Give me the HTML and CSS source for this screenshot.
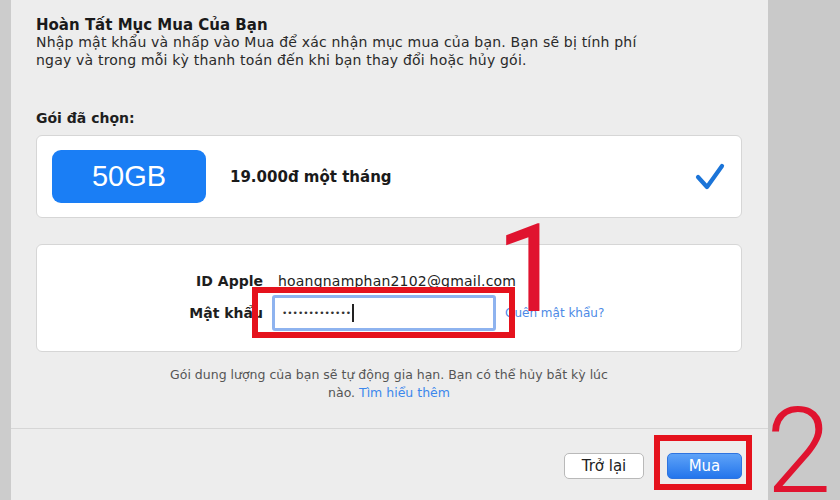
FILE: index.html
```html
<!DOCTYPE html>
<html>
<head>
<meta charset="utf-8">
<title>Hoàn Tất Mục Mua Của Bạn</title>
<link rel="stylesheet" href="styles.css">
</head>
<body>
  <div class="edge edge-left"></div>
  <div class="dialog">
    <div class="dialog-body">
      <h1 class="title">Hoàn Tất Mục Mua Của Bạn</h1>
      <p class="intro">Nhập mật khẩu và nhấp vào Mua để xác nhận mục mua của bạn. Bạn sẽ bị tính phí<br>ngay và trong mỗi kỳ thanh toán đến khi bạn thay đổi hoặc hủy gói.</p>
      <div class="section-label">Gói đã chọn:</div>

      <!-- gói đã chọn -->
      <div class="card plan">
        <div class="plan-size">50GB</div>
        <div class="plan-price">19.000đ một tháng</div>
        <svg class="check" width="30" height="28" viewBox="0 0 30 28">
          <path d="M3 14 L12 24 L27 3" fill="none" stroke="#1b74d8" stroke-width="4.2" stroke-linecap="round" stroke-linejoin="round"/>
        </svg>
      </div>

      <!-- đăng nhập -->
      <div class="card login">
        <div class="field-name">ID Apple</div>
        <div class="field-value">hoangnamphan2102@gmail.com</div>
        <div></div>
        <div class="field-name">Mật khẩu</div>
        <div class="password"><span class="dots">•••••••••••••</span><span class="caret"></span></div>
        <a class="forgot">Quên mật khẩu?</a>
      </div>

      <p class="note">Gói dung lượng của bạn sẽ tự động gia hạn. Bạn có thể hủy bất kỳ lúc<br>nào. <a>Tìm hiểu thêm</a></p>
    </div>
    <div class="dialog-footer">
      <button class="btn">Trở lại</button>
      <button class="btn btn-primary">Mua</button>
    </div>
  </div>
  <div class="edge edge-right"></div>

  <!-- chú thích màu đỏ -->
  <div class="mark-box mark-box-1"></div>
  <div class="mark-num mark-num-1">1</div>
  <div class="mark-box mark-box-2"></div>
  <div class="mark-num mark-num-2">2</div>
</body>
</html>
```

FILE: styles.css
```css
body {
  margin: 0;
  height: 500px;
  overflow: hidden;
  display: flex;
  position: relative;
  background: #c9c9c9;
  font-family: "DejaVu Sans", sans-serif;
  color: #1e1e1e;
}

.edge { flex: none; }
.edge-left { width: 11px; background: #cccccc; }
.edge-right { flex: 1; background: #c9c9c9; }

.dialog {
  width: 757px;
  flex: none;
  background: #ededed;
  display: flex;
  flex-direction: column;
}
.dialog-body { padding: 17px 26px 0 25px; }

.title {
  margin: 0;
  font-size: 15px;
  font-weight: bold;
  line-height: 16px;
  color: #1a1a1a;
}
.intro {
  margin: 0 0 40px;
  font-size: 14px;
  line-height: 18px;
  letter-spacing: 0.2px;
  color: #2a2a2a;
}
.section-label {
  font-size: 14px;
  font-weight: bold;
  line-height: 18px;
  margin-bottom: 8px;
}

.card {
  background: #fff;
  border: 1px solid #d6d6d6;
  border-radius: 6px;
}

/* gói */
.plan {
  height: 83px;
  box-sizing: border-box;
  display: flex;
  align-items: center;
  padding: 0 16px 0 15px;
}
.plan-size {
  width: 154px;
  height: 53px;
  border-radius: 9px;
  background: #1a7ef5;
  color: #fff;
  font-family: "Liberation Sans", sans-serif;
  font-size: 29px;
  display: flex;
  align-items: center;
  justify-content: center;
}
.plan-price {
  flex: 1;
  margin-left: 24px;
  font-size: 15px;
  font-weight: bold;
  color: #1a1a1a;
}

/* đăng nhập */
.login {
  margin-top: 26px;
  padding: 26px 0 20px;
  display: grid;
  grid-template-columns: 226px 224px auto;
  column-gap: 9px;
  row-gap: 4px;
  align-items: center;
}
.field-name {
  text-align: right;
  font-size: 14px;
  font-weight: bold;
  line-height: 20px;
}
.field-value {
  padding-left: 6px;
  font-size: 14px;
  line-height: 20px;
  letter-spacing: 0.2px;
  color: #222;
}
.password {
  height: 36px;
  box-sizing: border-box;
  border: 3px solid #8eb3ef;
  border-radius: 3px;
  display: flex;
  align-items: center;
  padding-left: 7px;
}
.dots { font-size: 9px; color: #333; }
.caret { width: 2px; height: 18px; background: #222; margin-left: 1px; }
.forgot {
  font-size: 12px;
  line-height: 20px;
  color: #4d8ae6;
}

.note {
  margin: 14px 0 0;
  text-align: center;
  font-size: 12.5px;
  line-height: 18px;
  color: #555;
}
.note a { color: #3b87ec; }

/* nút */
.dialog-footer {
  margin-top: 26px;
  border-top: 1px solid #d6d6d6;
  padding: 24px 26px 0;
  display: flex;
  justify-content: flex-end;
  gap: 23px;
}
.btn {
  width: 80px;
  height: 26px;
  padding: 0;
  border: 1px solid #b9b9b9;
  border-radius: 5px;
  background: #fff;
  color: #222;
  font-family: "DejaVu Sans", sans-serif;
  font-size: 15px;
}
.btn-primary {
  width: 75px;
  border-color: #2e74e0;
  background: linear-gradient(#5ea3f8, #2475ec);
  color: #fff;
}

/* chú thích */
.mark-box {
  position: absolute;
  box-sizing: border-box;
  border: 6px solid #e5121d;
}
.mark-box-1 { left: 252px; top: 287px; width: 263px; height: 51px; }
.mark-box-2 { left: 654px; top: 435px; width: 98px; height: 55px; }
.mark-num {
  position: absolute;
  font-family: Roboto, "Liberation Sans", sans-serif;
  font-weight: 300;
  line-height: 0.8;
  color: #e0132f;
}
.mark-num-1 { left: 496px; top: 221px; font-size: 122px; font-weight: 400; }
.mark-num-2 { left: 766px; top: 405px; font-size: 118px; }
```
